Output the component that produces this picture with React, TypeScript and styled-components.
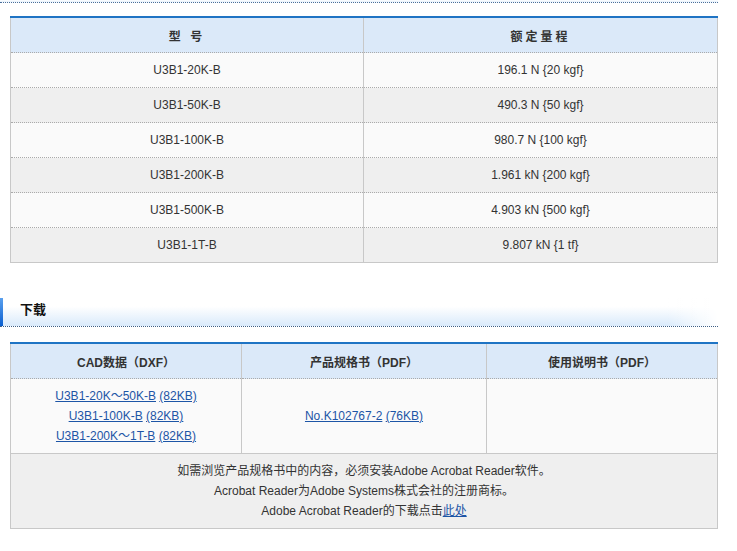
import React from "react";
import styled, { createGlobalStyle } from "styled-components";

const Global = createGlobalStyle`
  html, body { margin: 0; padding: 0; background: #fff; }
  body {
    font-family: "Liberation Sans", Arial, "Noto Sans CJK SC", sans-serif;
    font-size: 12px;
    color: #333;
  }
`;

const Page = styled.div`
  width: 718px;
  display: flex;
  flex-direction: column;
`;

const TopStrip = styled.div`
  height: 2px;
  background: linear-gradient(to bottom, #ffffff, #e4f0fc);
  border-bottom: 1px dotted #4a6f9a;
  margin-bottom: 13px;
`;

const Wrap = styled.div`
  padding-left: 10px;
`;

const Table = styled.table`
  width: 708px;
  border-collapse: collapse;
  table-layout: fixed;
  border-top: 2px solid #1f74c4;
  border-left: 1px solid #c8c8c8;
  border-right: 1px solid #c8c8c8;
  border-bottom: 1px solid #c8c8c8;
`;

const Th = styled.th<{ $spaced?: boolean }>`
  height: 34px;
  padding: 0;
  background: #dbe9f9;
  font-weight: bold;
  font-size: 12px;
  color: #333;
  text-align: center;
  letter-spacing: ${(p) => (p.$spaced ? "3px" : "0")};
  border-right: 1px solid #c8c8c8;
  border-bottom: 1px dotted #aaa;
  &:last-child { border-right: none; }
`;

const Td = styled.td<{ $alt?: boolean; $h?: number }>`
  height: ${(p) => p.$h ?? 34}px;
  padding: 0;
  text-align: center;
  vertical-align: middle;
  background: ${(p) => (p.$alt ? "#efefef" : "#fafafa")};
  border-right: 1px solid #c8c8c8;
  border-bottom: 1px dotted #aaa;
  &:last-child { border-right: none; }
`;

const Row = styled.tr<{ $last?: boolean }>`
  td { border-bottom: ${(p) => (p.$last ? "1px solid #c8c8c8" : "1px dotted #aaa")}; }
`;

const SectionHead = styled.div`
  margin-top: 35px;
  height: 28px;
  display: flex;
  align-items: center;
  border-bottom: 1px dotted #3e5f86;
  background:
    linear-gradient(to right, rgba(255,255,255,0) 93%, #ffffff 100%),
    linear-gradient(to bottom, #ffffff 30%, #d9eafb 100%);
  margin-bottom: 15px;
`;

const Bar = styled.span`
  width: 3px;
  align-self: stretch;
  background: linear-gradient(to bottom, #5aa0ee, #0a5fd0);
`;

const HeadText = styled.h2`
  margin: 0 0 8px 17px;
  font-size: 13px;
  font-weight: bold;
  color: #111;
  font-family: "Noto Sans CJK SC", sans-serif;
`;

const Lines = styled.div`
  line-height: 20px;
  padding: 7px 0;
`;

const Link = styled.a`
  color: #1d55a6;
  text-decoration: underline;
`;

const models = [
  ["U3B1-20K-B", "196.1 N {20 kgf}"],
  ["U3B1-50K-B", "490.3 N {50 kgf}"],
  ["U3B1-100K-B", "980.7 N {100 kgf}"],
  ["U3B1-200K-B", "1.961 kN {200 kgf}"],
  ["U3B1-500K-B", "4.903 kN {500 kgf}"],
  ["U3B1-1T-B", "9.807 kN {1 tf}"],
];

const cad = ["U3B1-20K～50K-B", "U3B1-100K-B", "U3B1-200K～1T-B"];

export default function App() {
  return (
    <Page>
      <Global />
      <TopStrip />
      <Wrap>
        <Table>
          <colgroup>
            <col style={{ width: 353 }} />
            <col />
          </colgroup>
          <thead>
            <tr>
              <Th $spaced>型 号</Th>
              <Th $spaced>额定量程</Th>
            </tr>
          </thead>
          <tbody>
            {models.map(([m, r], i) => (
              <Row key={m} $last={i === models.length - 1}>
                <Td $alt={i % 2 === 1}>{m}</Td>
                <Td $alt={i % 2 === 1}>{r}</Td>
              </Row>
            ))}
          </tbody>
        </Table>
      </Wrap>
      <SectionHead>
        <Bar />
        <HeadText>下载</HeadText>
      </SectionHead>
      <Wrap>
        <Table>
          <colgroup>
            <col style={{ width: 231 }} />
            <col style={{ width: 245 }} />
            <col />
          </colgroup>
          <thead>
            <tr>
              <Th>CAD数据（DXF）</Th>
              <Th>产品规格书（PDF）</Th>
              <Th>使用说明书（PDF）</Th>
            </tr>
          </thead>
          <tbody>
            <Row $last>
              <Td $h={74}>
                <Lines>
                  {cad.map((c) => (
                    <div key={c}>
                      <Link href="#">{c}</Link> <Link href="#">(82KB)</Link>
                    </div>
                  ))}
                </Lines>
              </Td>
              <Td $h={74}>
                <Link href="#">No.K102767-2</Link> <Link href="#">(76KB)</Link>
              </Td>
              <Td $h={74} />
            </Row>
            <Row $last>
              <Td colSpan={3} $alt $h={73}>
                <Lines>
                  <div>如需浏览产品规格书中的内容，必须安装Adobe Acrobat Reader软件。</div>
                  <div>Acrobat Reader为Adobe Systems株式会社的注册商标。</div>
                  <div>
                    Adobe Acrobat Reader的下载点击<Link href="#">此处</Link>
                  </div>
                </Lines>
              </Td>
            </Row>
          </tbody>
        </Table>
      </Wrap>
    </Page>
  );
}
